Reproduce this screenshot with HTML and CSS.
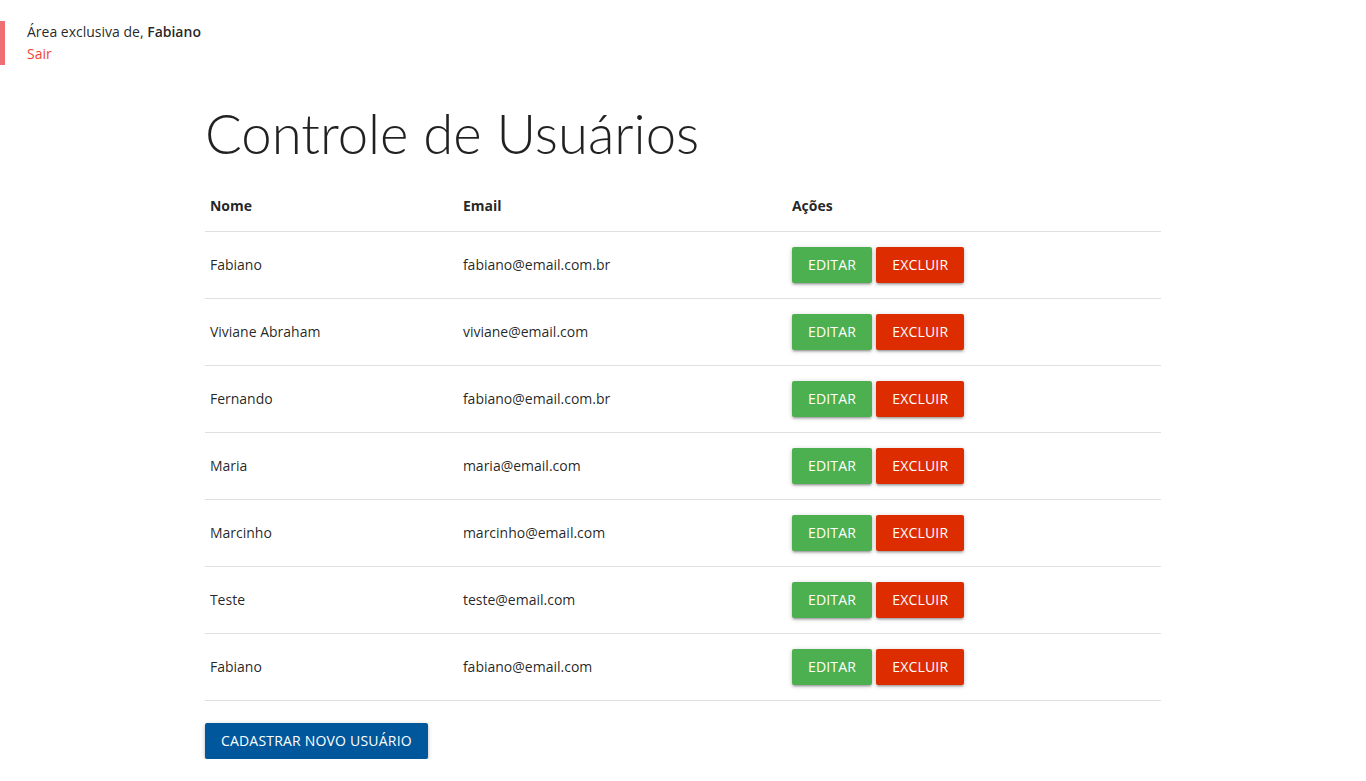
FILE: index.html
```html
<!DOCTYPE html>
<html lang="pt-BR">
<head>
<meta charset="utf-8">
<title>Controle de Usuários</title>
<link rel="stylesheet" href="styles.css">
</head>
<body>
<blockquote class="welcome">
  <div>Área exclusiva de, <b>Fabiano</b></div>
  <a class="logout" href="#">Sair</a>
</blockquote>
<main class="container">
  <h2 class="title">Controle de Usuários</h2>
  <table class="users">
    <thead>
      <tr><th class="c-name">Nome</th><th class="c-email">Email</th><th>Ações</th></tr>
    </thead>
    <tbody>
      <tr><td>Fabiano</td><td>fabiano@email.com.br</td><td><div class="actions"><a class="btn btn-green" href="#">Editar</a><a class="btn btn-red" href="#">Excluir</a></div></td></tr>
      <tr><td>Viviane Abraham</td><td>viviane@email.com</td><td><div class="actions"><a class="btn btn-green" href="#">Editar</a><a class="btn btn-red" href="#">Excluir</a></div></td></tr>
      <tr><td>Fernando</td><td>fabiano@email.com.br</td><td><div class="actions"><a class="btn btn-green" href="#">Editar</a><a class="btn btn-red" href="#">Excluir</a></div></td></tr>
      <tr><td>Maria</td><td>maria@email.com</td><td><div class="actions"><a class="btn btn-green" href="#">Editar</a><a class="btn btn-red" href="#">Excluir</a></div></td></tr>
      <tr><td>Marcinho</td><td>marcinho@email.com</td><td><div class="actions"><a class="btn btn-green" href="#">Editar</a><a class="btn btn-red" href="#">Excluir</a></div></td></tr>
      <tr><td>Teste</td><td>teste@email.com</td><td><div class="actions"><a class="btn btn-green" href="#">Editar</a><a class="btn btn-red" href="#">Excluir</a></div></td></tr>
      <tr><td>Fabiano</td><td>fabiano@email.com</td><td><div class="actions"><a class="btn btn-green" href="#">Editar</a><a class="btn btn-red" href="#">Excluir</a></div></td></tr>
    </tbody>
  </table>
  <a class="btn btn-blue btn-new" href="#">Cadastrar novo usuário</a>
</main>
</body>
</html>
```
FILE: styles.css
```css
html, body {
  margin: 0;
  padding: 0;
}
body {
  font-family: "Open Sans", "Noto Sans", "Liberation Sans", sans-serif;
  font-size: 14px;
  line-height: 1.5;
  color: rgba(0, 0, 0, 0.87);
  background: #fff;
}
.welcome {
  margin: 21px 0 20px;
  padding-left: 22px;
  border-left: 5px solid #ee6e73;
  line-height: 22px;
}
.welcome b {
  font-weight: 600;
}
.logout {
  color: #f44336;
  text-decoration: none;
}
.container {
  width: 70%;
  margin: 0 auto;
}
.title {
  font-family: Lato, "Open Sans", sans-serif;
  font-size: 54.5px;
  font-weight: 300;
  line-height: 62.7px;
  margin: 36.5px 0 13.5px;
  color: rgba(0, 0, 0, 0.87);
}
.users {
  width: 100%;
  border-collapse: collapse;
}
.users tr {
  border-bottom: 1px solid rgba(0, 0, 0, 0.12);
}
.users th,
.users td {
  padding: 15px 5px;
  text-align: left;
  vertical-align: middle;
  line-height: 22.5px;
}
.users th {
  font-weight: 700;
  padding: 17px 5px 14px;
}
.c-name {
  width: 243px;
}
.c-email {
  width: 319px;
}
.actions {
  display: flex;
  gap: 4px;
}
.btn {
  display: inline-block;
  height: 36px;
  line-height: 36px;
  padding: 0 16px;
  font-size: 14px;
  letter-spacing: 0.2px;
  text-transform: uppercase;
  text-decoration: none;
  color: #fff;
  border-radius: 2px;
  box-shadow: 0 2px 2px 0 rgba(0, 0, 0, 0.14), 0 3px 1px -2px rgba(0, 0, 0, 0.12), 0 1px 5px 0 rgba(0, 0, 0, 0.2);
}
.btn-green {
  background: #4caf50;
}
.btn-red {
  background: #dd2c00;
}
.btn-blue {
  background: #01579b;
}
.btn-new {
  margin-top: 22px;
}
```
